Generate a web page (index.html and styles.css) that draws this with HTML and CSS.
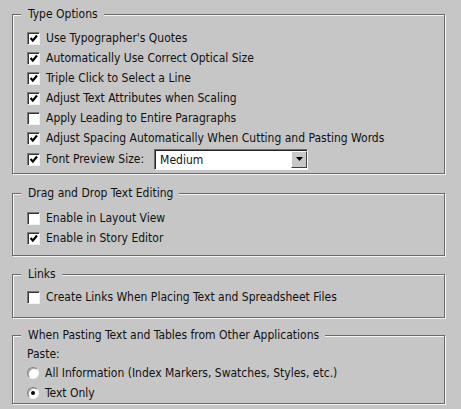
FILE: index.html
```html
<!DOCTYPE html>
<html>
<head>
<meta charset="utf-8">
<link rel="stylesheet" href="styles.css">
</head>
<body>
<div class="panel">
  <fieldset class="group g1">
    <legend>Type Options</legend>
    <div class="row"><span class="cb on"></span><span>Use Typographer's Quotes</span></div>
    <div class="row"><span class="cb on"></span><span>Automatically Use Correct Optical Size</span></div>
    <div class="row"><span class="cb on"></span><span>Triple Click to Select a Line</span></div>
    <div class="row"><span class="cb on"></span><span>Adjust Text Attributes when Scaling</span></div>
    <div class="row"><span class="cb"></span><span>Apply Leading to Entire Paragraphs</span></div>
    <div class="row"><span class="cb on"></span><span>Adjust Spacing Automatically When Cutting and Pasting Words</span></div>
    <div class="row row-select"><span class="cb on"></span><span>Font Preview Size:</span>
      <div class="select"><span class="sel-text">Medium</span><span class="sel-btn"><svg width="7" height="4" viewBox="0 0 7 4"><path d="M0 0H7L3.5 4Z" fill="#000"/></svg></span></div>
    </div>
  </fieldset>

  <fieldset class="group g2">
    <legend>Drag and Drop Text Editing</legend>
    <div class="row"><span class="cb"></span><span>Enable in Layout View</span></div>
    <div class="row"><span class="cb on"></span><span>Enable in Story Editor</span></div>
  </fieldset>

  <fieldset class="group g3">
    <legend>Links</legend>
    <div class="row"><span class="cb"></span><span>Create Links When Placing Text and Spreadsheet Files</span></div>
  </fieldset>

  <fieldset class="group g4">
    <legend>When Pasting Text and Tables from Other Applications</legend>
    <div class="row label-row"><span>Paste:</span></div>
    <div class="row"><span class="rb"></span><span>All Information (Index Markers, Swatches, Styles, etc.)</span></div>
    <div class="row"><span class="rb on"></span><span>Text Only</span></div>
  </fieldset>
</div>
</body>
</html>
```
FILE: styles.css
```css
html, body {
  margin: 0;
  padding: 0;
  background: #c6c6c6;
}
body {
  width: 461px;
  height: 409px;
  overflow: hidden;
  font-family: "DejaVu Sans Condensed", "DejaVu Sans", sans-serif;
  font-size: 12px;
  color: #111;
}
.panel {
  padding: 7px 16px 0 12px;
  display: flex;
  flex-direction: column;
}
.group {
  margin: 0;
  border: 1px solid #6a6a6a;
  box-shadow: 1px 1px 0 #f4f4f4, inset 1px 1px 0 #f4f4f4;
  padding: 0 8px 0 14px;
  min-width: 0;
}
.group legend {
  margin-left: -6px;
  padding: 0 6px 0 7px;
  line-height: 14px;
  background: #c6c6c6;
}
.g1 { padding-top: 7px; padding-bottom: 3px; }
.g2 { margin-top: 12px; padding-top: 8px; padding-bottom: 7px; }
.g3 { margin-top: 11px; padding-top: 6px; padding-bottom: 10px; }
.g4 { margin-top: 10px; padding-top: 2px; padding-bottom: 0; }
.row {
  display: flex;
  align-items: center;
  gap: 6px;
  height: 20px;
  white-space: nowrap;
}
.row-select { height: 22px; }
.cb {
  box-sizing: border-box;
  width: 13px;
  height: 13px;
  flex: none;
  background: #fff;
  border: 1px solid;
  border-color: #7a7a7a #f0f0f0 #f0f0f0 #7a7a7a;
  box-shadow: inset 1px 1px 0 #333;
  position: relative;
}
.cb.on::after {
  content: "";
  position: absolute;
  left: 2px;
  top: 1px;
  width: 8px;
  height: 9px;
  background: url("data:image/svg+xml,%3Csvg xmlns='http://www.w3.org/2000/svg' width='8' height='9'%3E%3Cpath d='M0.5 4L2.8 6.6L7 1.5' fill='none' stroke='%23000' stroke-width='2.2'/%3E%3C/svg%3E") no-repeat;
}
.rb {
  box-sizing: border-box;
  width: 12px;
  height: 12px;
  flex: none;
  border-radius: 50%;
  background: #fff;
  border: 1px solid;
  border-color: #808080 #f4f4f4 #f4f4f4 #808080;
  box-shadow: inset 1px 1px 0 #aaa;
  position: relative;
}
.rb.on::after {
  content: "";
  position: absolute;
  left: 3px;
  top: 3px;
  width: 4px;
  height: 4px;
  border-radius: 50%;
  background: #000;
}
.label-row { height: 19px; }
.select {
  box-sizing: border-box;
  display: flex;
  width: 154px;
  height: 21px;
  margin-left: 4px;
  background: #fff;
  border: 1px solid;
  border-color: #6e6e6e #fafafa #fafafa #6e6e6e;
  box-shadow: inset 1px 1px 0 #222;
}
.sel-text {
  flex: 1;
  padding: 2px 0 0 5px;
  line-height: 16px;
}
.sel-btn {
  box-sizing: border-box;
  width: 16px;
  height: 17px;
  margin: 1px 0 0 0;
  background: #c8c8c8;
  border: 1px solid;
  border-color: #fafafa #404040 #404040 #fafafa;
  display: flex;
  align-items: center;
  justify-content: center;
}
```
